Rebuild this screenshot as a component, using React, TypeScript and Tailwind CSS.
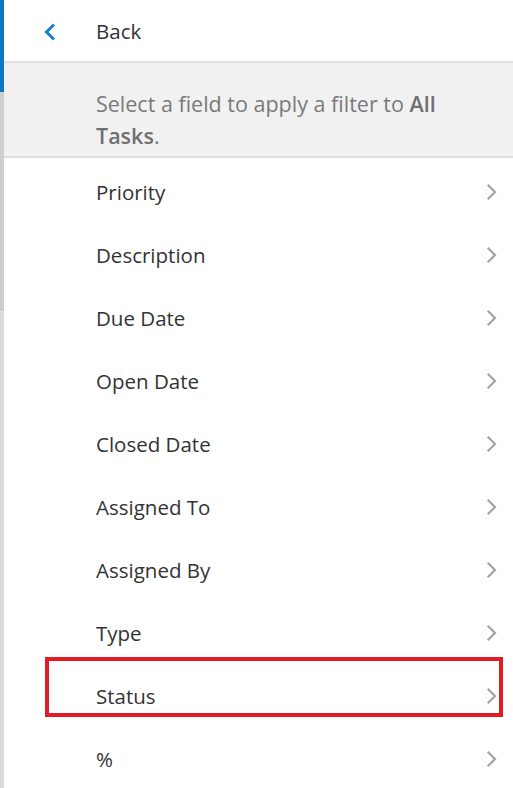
import React from "react";

const items = [
  "Priority",
  "Description",
  "Due Date",
  "Open Date",
  "Closed Date",
  "Assigned To",
  "Assigned By",
  "Type",
  "Status",
  "%",
];

function Chevron() {
  return (
    <svg width="14" height="18" viewBox="0 0 14 18" fill="none">
      <path d="M3.5 2.5 L10 9 L3.5 15.5" stroke="#a3a3a3" strokeWidth="2.2" strokeLinecap="square" strokeLinejoin="miter" />
    </svg>
  );
}

export default function App() {
  return (
    <div className="flex w-[513px] h-[788px] overflow-hidden bg-white" style={{ fontFamily: '"Open Sans", "Noto Sans", sans-serif' }}>
      <div className="w-[4px] flex flex-col shrink-0">
        <div className="h-[92px] bg-[#0a78c4]" />
        <div className="h-[218px] bg-[#cfcfcf] border-b border-[#bdbdbd]" />
        <div className="flex-1 bg-[#dcdcdc]" />
      </div>
      <div className="flex-1 flex flex-col">
        <div className="h-[63px] flex items-center pt-[2px] border-b-2 border-[#e2e2e2] shrink-0">
          <div className="w-[92px] pl-[38px] flex items-center">
            <svg width="16" height="18" viewBox="0 0 16 18" fill="none">
              <path d="M11 2.5 L4.5 9 L11 15.5" stroke="#1b7fc4" strokeWidth="3" strokeLinecap="square" />
            </svg>
          </div>
          <span className="text-[20.5px] text-[#333333]">Back</span>
        </div>
        <div className="h-[95px] bg-[#f1f1f1] border-b-2 border-[#dedede] pl-[92px] pr-[40px] pt-[25px] shrink-0">
          <p className="text-[21.5px] leading-[32px] text-[#7a7a7a]">
            Select a field to apply a filter to <b className="font-semibold text-[#707070]">All Tasks</b>.
          </p>
        </div>
        <div className="flex flex-col">
          {items.map((it) => (
            <div key={it} className="relative h-[63px] flex items-center pt-[5px] pl-[92px] pr-[14px] shrink-0">
              <span className="flex-1 text-[20.5px] text-[#333333]">{it}</span>
              <Chevron />
              {it === "Status" && (
                <div className="absolute left-[41px] top-[-5px] w-[458px] h-[60px] border-[4.5px] border-[#e31b23]" />
              )}
            </div>
          ))}
        </div>
      </div>
    </div>
  );
}
